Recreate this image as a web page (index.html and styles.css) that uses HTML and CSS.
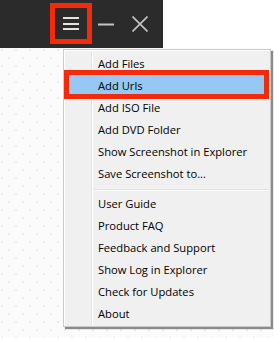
FILE: index.html
```html
<!DOCTYPE html>
<html lang="en">
<head>
    <meta charset="UTF-8">
    <meta name="viewport" content="width=device-width, initial-scale=1.0">
    <title>Menu</title>
    <link rel="stylesheet" href="styles.css">
</head>
<body>
    <div class="page">
        <div class="topbar">
            <div class="titlebar">
                <button class="menu-btn" aria-label="Menu">
                    <span class="bar"></span>
                    <span class="bar"></span>
                    <span class="bar"></span>
                </button>
                <button class="win-btn" aria-label="Minimize">
                    <svg width="16" height="16" viewBox="0 0 16 16"><path d="M0 8.5H16" stroke="#c4c4c4" stroke-width="2"/></svg>
                </button>
                <button class="win-btn close" aria-label="Close">
                    <svg width="16" height="16" viewBox="0 0 16 16"><path d="M0.5 0.5L15.5 15.5M15.5 0.5L0.5 15.5" stroke="#c4c4c4" stroke-width="1.6"/></svg>
                </button>
            </div>
            <div class="blank"></div>
        </div>
        <div class="content"></div>

        <ul class="dropdown">
            <li class="item">Add Files</li>
            <li class="item active">Add Urls</li>
            <li class="item">Add ISO File</li>
            <li class="item">Add DVD Folder</li>
            <li class="item">Show Screenshot in Explorer</li>
            <li class="item">Save Screenshot to...</li>
            <li class="separator"></li>
            <li class="item">User Guide</li>
            <li class="item">Product FAQ</li>
            <li class="item">Feedback and Support</li>
            <li class="item">Show Log in Explorer</li>
            <li class="item">Check for Updates</li>
            <li class="item">About</li>
        </ul>
    </div>
</body>
</html>
```

FILE: styles.css
```css
body {
    margin: 0;
    padding: 0;
    font-family: 'Open Sans', 'Noto Sans', sans-serif;
    background-color: #fff;
}

.page {
    position: relative;
    width: 274px;
    height: 338px;
    overflow: hidden;
    display: flex;
    flex-direction: column;
}

.topbar {
    display: flex;
    height: 48px;
}

.titlebar {
    width: 163px;
    background-color: #2b2b2b;
    display: flex;
    align-items: flex-start;
    padding-left: 50px;
    box-sizing: border-box;
}

.blank {
    flex: 1;
    background-color: #fff;
}

.menu-btn {
    width: 42px;
    height: 41px;
    margin-top: 3px;
    border: 5px solid #f42a0a;
    background: #2b2b2b;
    padding: 0;
    display: flex;
    flex-direction: column;
    align-items: center;
    justify-content: center;
    gap: 3.5px;
    box-sizing: border-box;
}

.menu-btn .bar {
    display: block;
    width: 16px;
    height: 2px;
    background-color: #e4e4da;
}

.win-btn {
    background: none;
    border: none;
    padding: 0;
    width: 16px;
    height: 16px;
    margin-top: 16px;
    margin-left: 6px;
}

.win-btn.close {
    margin-left: 18px;
}

.win-btn svg {
    display: block;
}

.content {
    flex: 1;
    background-color: #fbfbfb;
    background-image:
        radial-gradient(circle, #ececec 1px, transparent 1.2px),
        radial-gradient(circle, #ececec 1px, transparent 1.2px);
    background-size: 14px 16px, 14px 16px;
    background-position: 2px 2px, 9px 10px;
    background-repeat: repeat;
}

/* dropdown menu lying over the page */
.dropdown {
    position: absolute;
    left: 63px;
    top: 49px;
    width: 208px;
    margin: 0;
    padding: 3px 2px 1px 2px;
    list-style: none;
    box-sizing: border-box;
    border: 1px solid #cbcbcb;
    background-color: #f0f0f0;
    background-image: linear-gradient(to right,
        transparent 27px, #e2e3e3 27px, #e2e3e3 28px,
        #fff 28px, #fff 29px, transparent 29px);
    box-shadow: inset 1px 1px 0 #fff, 2px 2px 1px rgba(0, 0, 0, 0.45);
    font-size: 11.2px;
    color: #000;
}

.item {
    position: relative;
    height: 22px;
    line-height: 22px;
    padding-left: 32px;
    white-space: nowrap;
}

.item.active {
    background-color: #96c8f3;
}

.item.active::after {
    content: "";
    position: absolute;
    left: -2px;
    right: -1px;
    top: -5px;
    bottom: -2px;
    border: 5px solid #f42a0a;
}

.separator {
    height: 8px;
    margin-left: 28px;
    background-image: linear-gradient(#e0e0e0, #e0e0e0), linear-gradient(#fff, #fff);
    background-size: 100% 1px, 100% 1px;
    background-position: 0 4px, 0 5px;
    background-repeat: no-repeat;
}
```
